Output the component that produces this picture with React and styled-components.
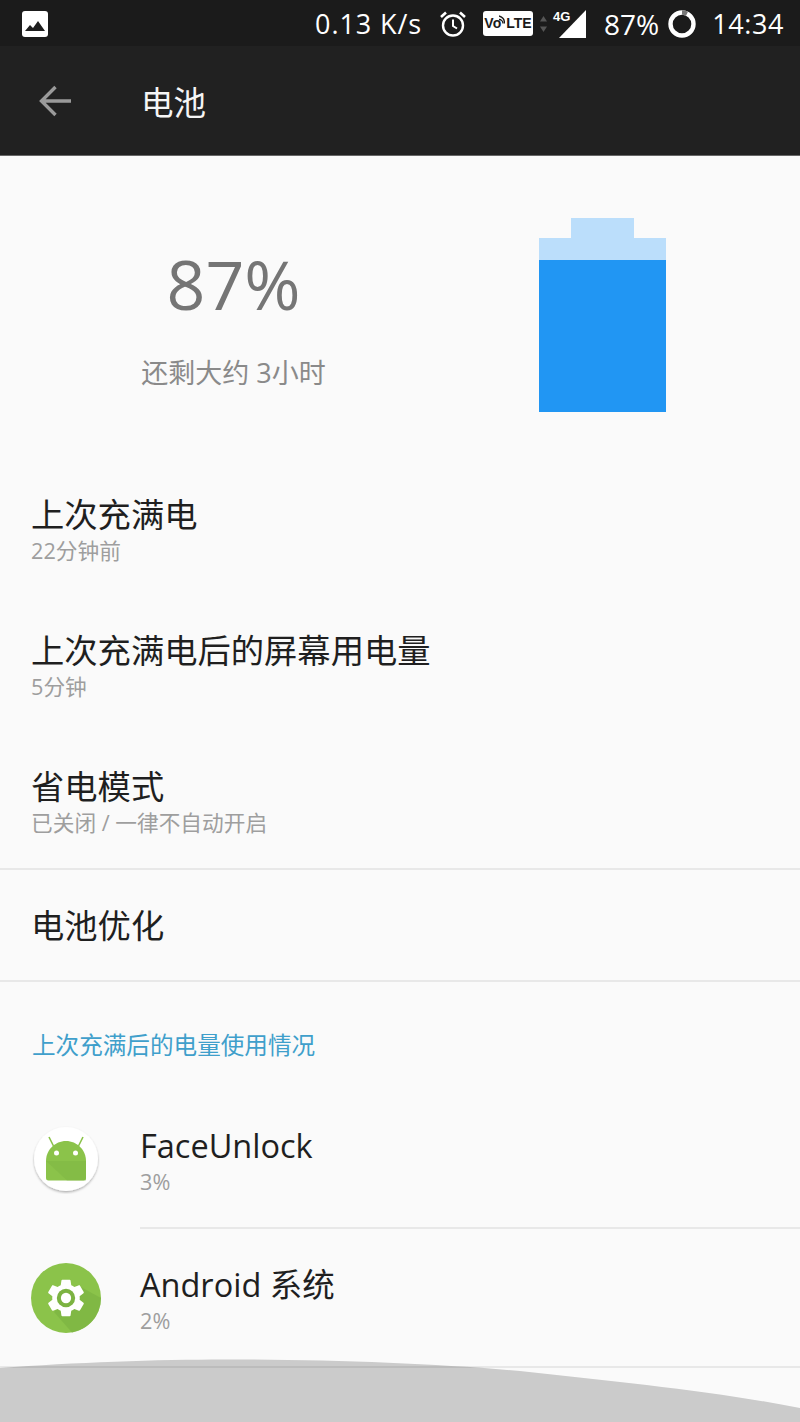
import styled, { createGlobalStyle } from "styled-components";

const Global = createGlobalStyle`
  html, body { margin: 0; padding: 0; background: #fafafa; }
  body { font-family: "Open Sans", "Noto Sans CJK SC", sans-serif; }
`;

const App = () => {
  return (
    <Page>
      <Global />
      <StatusBar>
        <PictureIcon viewBox="0 0 26 26">
          <rect width="26" height="26" rx="3" fill="#fff" />
          <path d="M3 20l5-6 3 3 5-7 7 10z" fill="#1e1e1e" />
        </PictureIcon>
        <Speed>0.13 K/s</Speed>
        <AlarmIcon viewBox="0 0 28 28" fill="none" stroke="#fff">
          <circle cx="14" cy="15.500" r="10" strokeWidth="2.400" />
          <path d="M14 9.500v6.500l4 2.500" strokeWidth="2" />
          <path d="M2 7l5-4.500M26 7l-5-4.500" strokeWidth="2.600" />
        </AlarmIcon>
        <VolteBadge>
          Vo
          <WifiArcs viewBox="0 0 6 12" fill="none" stroke="#1b1b1b" strokeWidth="1.300">
            <path d="M0 4.500a4 4 0 0 1 4 4M0 1a7.500 7.500 0 0 1 5.500 7.500" />
          </WifiArcs>
          LTE
        </VolteBadge>
        <ArrowsIcon viewBox="0 0 9 18">
          <path d="M4.500 1L8 6.500H1z" fill="#555" />
          <path d="M4.500 17L8 11.500H1z" fill="#555" />
        </ArrowsIcon>
        <Network>
          <NetworkLabel>4G</NetworkLabel>
          <SignalIcon viewBox="0 0 28 28">
            <path d="M27 0v28H0z" fill="#fff" />
          </SignalIcon>
        </Network>
        <Percent>87%</Percent>
        <RingIcon viewBox="0 0 28 28" fill="none" strokeWidth="4.400">
          <circle cx="14" cy="14" r="11.500" stroke="#fff" />
          <path d="M14 2.500A11.500 11.500 0 0 1 19 3.700" stroke="#777" />
        </RingIcon>
        <Clock>14:34</Clock>
      </StatusBar>

      <Toolbar>
        <BackIcon viewBox="0 0 32 32" fill="none" stroke="#9a9a9a" strokeWidth="3.400">
          <path d="M32 16H3M16.500 2L2.500 16l14 14" />
        </BackIcon>
        <ToolbarTitle>电池</ToolbarTitle>
      </Toolbar>

      <Hero>
        <Summary>
          <BigPercent>87%</BigPercent>
          <Remaining>还剩大约 3小时</Remaining>
        </Summary>
        <Battery>
          <BatteryCap />
          <BatteryBody>
            <BatteryFill />
          </BatteryBody>
        </Battery>
      </Hero>

      <InfoList>
        <InfoRow>
          <RowTitle>上次充满电</RowTitle>
          <RowSub>22分钟前</RowSub>
        </InfoRow>
        <InfoRow>
          <RowTitle>上次充满电后的屏幕用电量</RowTitle>
          <RowSub>5分钟</RowSub>
        </InfoRow>
        <InfoRow>
          <RowTitle>省电模式</RowTitle>
          <RowSub>已关闭 / 一律不自动开启</RowSub>
        </InfoRow>
      </InfoList>

      <OptimizeRow>
        <RowTitle>电池优化</RowTitle>
      </OptimizeRow>

      <SectionTitle>上次充满后的电量使用情况</SectionTitle>

      <AppRow>
        <AppIcon viewBox="0 0 70 70">
          <defs>
            <filter id="soft" x="-20%" y="-20%" width="140%" height="140%">
              <feDropShadow dx="0" dy="1.500" stdDeviation="1.200" floodColor="#000" floodOpacity="0.3" />
            </filter>
          </defs>
          <circle cx="35" cy="35" r="32" fill="#fff" filter="url(#soft)" />
          <path d="M18 13l4.500 9M52 13l-4.500 9" stroke="#8bc34a" strokeWidth="1.600" />
          <path d="M15 37c0-11 9-20 20-20s20 9 20 20z" fill="#8bc34a" />
          <path d="M15 37h40v17a2.500 2.500 0 0 1-2.500 2.500h-35A2.500 2.500 0 0 1 15 54z" fill="#8bc34a" />
          <path d="M15 37h40v19.500H36z" fill="#7cb342" opacity="0.45" />
          <circle cx="25.500" cy="29" r="2.500" fill="#fff" />
          <circle cx="44.500" cy="29" r="2.500" fill="#fff" />
        </AppIcon>
        <AppText>
          <AppName>FaceUnlock</AppName>
          <RowSub>3%</RowSub>
        </AppText>
      </AppRow>
      <InsetDivider />
      <AppRow>
        <AppIcon viewBox="0 0 70 70">
          <circle cx="35" cy="35" r="35" fill="#8bc34a" />
          <path d="M23 49L46 22l24 13a35 35 0 0 1-29 34.500z" fill="#7cb342" opacity="0.7" />
          <g transform="translate(13 13) scale(1.833)">
            <path
              d="M19.430 12.980c.04-.32.07-.64.07-.98s-.03-.66-.07-.98l2.110-1.650c.19-.15.24-.42.12-.64l-2-3.460c-.12-.22-.39-.3-.61-.22l-2.490 1c-.52-.4-1.080-.73-1.690-.98l-.38-2.650C14.460 2.180 14.250 2 14 2h-4c-.25 0-.46.18-.49.42l-.38 2.650c-.61.25-1.170.59-1.690.98l-2.490-1c-.23-.09-.49 0-.61.22l-2 3.460c-.13.22-.07.49.12.64l2.110 1.650c-.04.32-.07.65-.07.98s.03.66.07.98l-2.110 1.650c-.19.15-.24.42-.12.64l2 3.460c.12.22.39.3.61.22l2.490-1c.52.4 1.080.73 1.690.98l.38 2.650c.03.24.24.42.49.42h4c.25 0 .46-.18.49-.42l.38-2.650c.61-.25 1.170-.59 1.690-.98l2.490 1c.23.09.49 0 .61-.22l2-3.460c.12-.22.07-.49-.12-.64l-2.110-1.650z"
              fill="#fff"
            />
            <circle cx="12" cy="12" r="5" fill="#7cb342" />
            <circle cx="12" cy="12" r="2.800" fill="#fff" />
          </g>
        </AppIcon>
        <AppText>
          <AppName>Android 系统</AppName>
          <RowSub>2%</RowSub>
        </AppText>
      </AppRow>
      <FullDivider />

      <Sheet viewBox="0 0 800 64" preserveAspectRatio="none">
        <path
          d="M0 10C80 4 170 1 240 1.500C340 2 440 6 520 13C620 24 720 34 800 50V64H0z"
          fill="rgba(0,0,0,0.19)"
        />
      </Sheet>
    </Page>
  );
};

const Page = styled.div`
  position: relative;
  width: 800px;
  height: 1422px;
  overflow: hidden;
  background: #fafafa;
`;

const StatusBar = styled.div`
  display: flex;
  align-items: center;
  height: 46px;
  padding: 1px 16px 0 22px;
  box-sizing: border-box;
  background: #1b1b1b;
  color: #fff;
`;

const PictureIcon = styled.svg`
  width: 26px;
  height: 26px;
  margin-right: auto;
`;

const Speed = styled.span`
  font-size: 27px;
  letter-spacing: 0.900px;
`;

const AlarmIcon = styled.svg`
  width: 28px;
  height: 28px;
  margin-left: 17px;
`;

const VolteBadge = styled.span`
  display: flex;
  justify-content: center;
  align-items: center;
  width: 50px;
  height: 25px;
  margin-left: 16px;
  border-radius: 3px;
  background: #fff;
  color: #1b1b1b;
  font-family: "Liberation Sans", sans-serif;
  font-size: 14px;
  font-weight: 700;
  line-height: 25px;
`;

const WifiArcs = styled.svg`
  width: 6px;
  height: 12px;
  margin: -5px 1px 0 -2px;
`;

const ArrowsIcon = styled.svg`
  width: 9px;
  height: 18px;
  margin-left: 6px;
`;

const Network = styled.div`
  position: relative;
  width: 34px;
  height: 28px;
  margin-left: 5px;
`;

const NetworkLabel = styled.span`
  position: absolute;
  left: 0;
  top: 0;
  font-family: "Liberation Sans", sans-serif;
  font-size: 13px;
  font-weight: 700;
  line-height: 13px;
`;

const SignalIcon = styled.svg`
  position: absolute;
  right: 0;
  top: 0;
  width: 28px;
  height: 28px;
`;

const Percent = styled.span`
  margin-left: 17px;
  font-size: 28px;
`;

const RingIcon = styled.svg`
  width: 28px;
  height: 28px;
  margin-left: 9px;
`;

const Clock = styled.span`
  margin-left: 16px;
  font-size: 27px;
  letter-spacing: 0.600px;
`;

const Toolbar = styled.div`
  display: flex;
  align-items: center;
  height: 110px;
  padding-left: 39px;
  box-sizing: border-box;
  background: #212121;
  border-bottom: 1px solid #666;
`;

const BackIcon = styled.svg`
  width: 32px;
  height: 32px;
`;

const ToolbarTitle = styled.h1`
  margin: 0 0 0 70px;
  color: #f5f5f5;
  font-size: 32.500px;
  font-weight: 400;
`;

const Hero = styled.section`
  display: flex;
  height: 291px;
  box-sizing: border-box;
  padding: 62px 134px 0 141px;
  justify-content: space-between;
`;

const Summary = styled.div`
  display: flex;
  flex-direction: column;
  align-items: center;
  width: 185px;
`;

const BigPercent = styled.div`
  margin-top: 21px;
  color: #757575;
  font-size: 68px;
  font-weight: 400;
  line-height: 90px;
`;

const Remaining = styled.div`
  margin-top: 24px;
  color: #8a8a8a;
  font-size: 27px;
  line-height: 40px;
  white-space: nowrap;
`;

const Battery = styled.div`
  display: flex;
  flex-direction: column;
  align-items: center;
  width: 127px;
`;

const BatteryCap = styled.div`
  width: 63px;
  height: 20px;
  background: #bbdefb;
`;

const BatteryBody = styled.div`
  display: flex;
  flex-direction: column;
  justify-content: flex-end;
  width: 127px;
  height: 174px;
  background: #bbdefb;
`;

const BatteryFill = styled.div`
  height: 152px;
  background: #2196f3;
`;

const InfoList = styled.div`
  padding-bottom: 13px;
  border-bottom: 2px solid #e8e8e8;
`;

const InfoRow = styled.div`
  display: flex;
  flex-direction: column;
  gap: 1px;
  height: 136px;
  padding: 45px 0 0 31px;
  box-sizing: border-box;
`;

const RowTitle = styled.div`
  color: #1f1f1f;
  font-size: 33.300px;
  line-height: 44px;
`;

const RowSub = styled.div`
  color: #9e9e9e;
  font-size: 21.700px;
  line-height: 28px;
`;

const OptimizeRow = styled.div`
  display: flex;
  align-items: center;
  height: 112px;
  padding-left: 31px;
  box-sizing: border-box;
  border-bottom: 2px solid #e8e8e8;
`;

const SectionTitle = styled.h2`
  margin: 0;
  padding: 47px 0 29px 32px;
  color: #3f9fcb;
  font-size: 23.600px;
  font-weight: 400;
  line-height: 32px;
`;

const AppRow = styled.div`
  display: flex;
  align-items: center;
  height: 137px;
  padding-left: 31px;
  box-sizing: border-box;
`;

const AppIcon = styled.svg`
  flex: none;
  width: 70px;
  height: 70px;
  margin-right: 39px;
`;

const AppText = styled.div`
  display: flex;
  flex-direction: column;
  padding-top: 3px;
`;

const AppName = styled.div`
  color: #1f1f1f;
  font-size: 32.500px;
  line-height: 44px;
`;

const InsetDivider = styled.div`
  height: 2px;
  margin-left: 140px;
  background: #e8e8e8;
`;

const FullDivider = styled.div`
  height: 2px;
  background: #e8e8e8;
`;

const Sheet = styled.svg`
  position: absolute;
  left: 0;
  bottom: 0;
  width: 800px;
  height: 64px;
`;

export default App;
